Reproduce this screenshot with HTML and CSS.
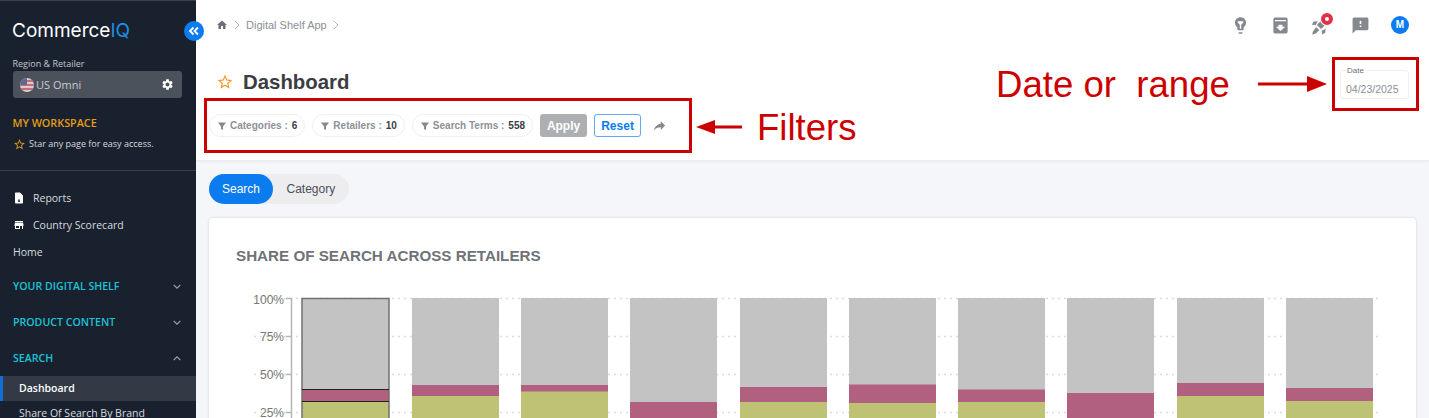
FILE: index.html
```html
<!DOCTYPE html>
<html lang="en">
<head>
    <meta charset="UTF-8">
    <meta name="viewport" content="width=device-width, initial-scale=1.0">
    <title>Dashboard - CommerceIQ</title>
    <link rel="stylesheet" href="styles.css">
</head>
<body>
    <div class="app">
        <aside class="sidebar">
            <div class="logo">Commerce<span class="logo-iq">IQ</span></div>
            <div class="region-label">Region &amp; Retailer</div>
            <div class="region-select">
                <svg class="flag" viewBox="0 0 14 14">
                    <defs><clipPath id="flag-clip"><circle cx="7" cy="7" r="7"/></clipPath></defs>
                    <g clip-path="url(#flag-clip)">
                        <rect width="14" height="14" fill="#e3c9cd"/>
                        <rect y="2" width="14" height="2" fill="#c46f7c"/>
                        <rect y="6" width="14" height="2" fill="#c46f7c"/>
                        <rect y="10" width="14" height="2" fill="#c46f7c"/>
                        <rect width="7" height="7" fill="#5d6b8f"/>
                    </g>
                </svg>
                <span class="region-name">US Omni</span>
                <svg class="gear" viewBox="0 0 24 24"><path d="M19.14 12.94c.04-.3.06-.61.06-.94 0-.32-.02-.64-.07-.94l2.03-1.58c.18-.14.23-.41.12-.61l-1.92-3.32c-.12-.22-.37-.29-.59-.22l-2.39.96c-.5-.38-1.03-.7-1.62-.94l-.36-2.54c-.04-.24-.24-.41-.48-.41h-3.84c-.24 0-.43.17-.47.41l-.36 2.54c-.59.24-1.13.57-1.62.94l-2.39-.96c-.22-.08-.47 0-.59.22L2.74 8.87c-.12.21-.08.47.12.61l2.03 1.58c-.05.3-.09.63-.09.94s.02.64.07.94l-2.03 1.58c-.18.14-.23.41-.12.61l1.92 3.32c.12.22.37.29.59.22l2.39-.96c.5.38 1.03.7 1.62.94l.36 2.54c.05.24.24.41.48.41h3.84c.24 0 .44-.17.47-.41l.36-2.54c.59-.24 1.13-.56 1.62-.94l2.39.96c.22.08.47 0 .59-.22l1.92-3.32c.12-.22.07-.47-.12-.61l-2.01-1.58zM12 15.6c-1.98 0-3.6-1.62-3.6-3.6s1.62-3.6 3.6-3.6 3.6 1.62 3.6 3.6-1.62 3.6-3.6 3.6z"/></svg>
            </div>
            <div class="workspace-title">MY WORKSPACE</div>
            <div class="workspace-hint">
                <svg class="hint-star" viewBox="0 0 24 24"><path d="M22 9.24l-7.19-.62L12 2 9.19 8.63 2 9.24l5.46 4.73L5.82 21 12 17.27 18.18 21l-1.63-7.03L22 9.24zM12 15.4l-3.76 2.27 1-4.28-3.32-2.88 4.38-.38L12 6.1l1.71 4.04 4.38.38-3.32 2.88 1 4.28L12 15.4z"/></svg>
                <span>Star any page for easy access.</span>
            </div>
            <nav class="side-nav">
                <a class="nav-link">
                    <svg class="nav-icon" viewBox="0 0 24 24"><path fill-rule="evenodd" d="M14 1H6C4.900 1 4 1.900 4 3v18c0 1.100.9 2 2 2h12c1.100 0 2-.9 2-2V7l-6-6zM10.500 15h3v5h-3z"/></svg>
                    Reports
                </a>
                <a class="nav-link">
                    <svg class="nav-icon" viewBox="0 0 24 24"><path d="M20 4H4v2h16V4zm1 10v-2l-1-5H4l-1 5v2h1v6h10v-6h4v6h2v-6h1zm-9 4H6v-4h6v4z"/></svg>
                    Country Scorecard
                </a>
                <a class="nav-link">Home</a>
                <div class="nav-section first">
                    <span>YOUR DIGITAL SHELF</span>
                    <svg class="chevron" viewBox="0 0 12 8"><path d="M2 2l4 4 4-4"/></svg>
                </div>
                <div class="nav-section">
                    <span>PRODUCT CONTENT</span>
                    <svg class="chevron" viewBox="0 0 12 8"><path d="M2 2l4 4 4-4"/></svg>
                </div>
                <div class="nav-section">
                    <span>SEARCH</span>
                    <svg class="chevron" viewBox="0 0 12 8"><path d="M2 6l4-4 4 4"/></svg>
                </div>
                <a class="sub-link active">Dashboard</a>
                <a class="sub-link">Share Of Search By Brand</a>
            </nav>
        </aside>

        <main class="content">
            <header class="page-header">
                <div class="topbar">
                    <div class="breadcrumbs">
                        <svg class="crumb-home" viewBox="0 0 24 24"><path d="M10 20v-6h4v6h5v-8h3L12 3 2 12h3v8z"/></svg>
                        <svg class="crumb-sep" viewBox="0 0 8 12"><path d="M2 2l4 4-4 4"/></svg>
                        <span>Digital Shelf App</span>
                        <svg class="crumb-sep" viewBox="0 0 8 12"><path d="M2 2l4 4-4 4"/></svg>
                    </div>
                    <div class="top-icons">
                        <svg class="top-icon" viewBox="0 0 24 24"><path d="M9.500 21.500c0 .55.45 1 1 1h3c.55 0 1-.45 1-1v-1h-5v1zM12 1.500C7.900 1.500 5 4.600 5 8.500c0 2.380 1.190 4.470 3 5.740V17c0 .55.45 1 1 1h6c.55 0 1-.45 1-1v-2.760c1.810-1.270 3-3.360 3-5.740 0-3.900-2.900-7-7-7z"/><path fill="#fff" d="M8.500 6.500h7v1.800l-2.600 2.600V16h-1.800v-5.100L8.500 8.300z"/></svg>
                        <svg class="top-icon" viewBox="0 0 24 24"><path fill-rule="evenodd" d="M5 2h14a2 2 0 0 1 2 2v16a2 2 0 0 1-2 2H5a2 2 0 0 1-2-2V4a2 2 0 0 1 2-2zm0 3v1.500h14V5zm4.500 6v2.500H6l6 5.500 6-5.500h-3.500V11z"/></svg>
                        <div class="rocket-wrap">
                            <svg class="top-icon" viewBox="0 0 24 24"><path d="M18 4.500c-4.500 1-8 3.500-10.500 7l5 5c3.500-2.500 6-6 7-10.500z"/><path d="M8.500 6.500L3.500 7 1 11l5 .5zM18.500 16l-.5 5-4 2.500-.5-5zM6.500 14l4 4-5 4.500-4 1 1-4z"/></svg>
                            <span class="rocket-badge"></span>
                        </div>
                        <svg class="top-icon" viewBox="0 0 24 24"><path d="M20 2H4c-1.100 0-2 .9-2 2v18l4-4h14c1.100 0 2-.9 2-2V4c0-1.100-.9-2-2-2zm-7 12h-2v-2h2v2zm0-4h-2V6h2v4z"/></svg>
                        <span class="avatar">M</span>
                    </div>
                </div>
                <div class="title-row">
                    <svg class="title-star" viewBox="0 0 24 24"><path d="M22 9.24l-7.19-.62L12 2 9.19 8.63 2 9.24l5.46 4.73L5.820 21 12 17.270 18.180 21l-1.630-7.030L22 9.240zM12 15.400l-3.760 2.270 1-4.280-3.320-2.880 4.380-.38L12 6.100l1.710 4.040 4.380.38-3.320 2.880 1 4.280L12 15.400z"/></svg>
                    <h1>Dashboard</h1>
                    <div class="date-field">
                        <span class="date-label">Date</span>
                        <span class="date-value">04/23/2025</span>
                    </div>
                </div>
                <div class="filters">
                    <div class="chip chip-categories">
                        <svg class="funnel" viewBox="0 0 10 10"><path d="M1 1.500h8L6 5.500v3.500L4 8V5.500z"/></svg>
                        <span class="chip-name">Categories :</span>
                        <b>6</b>
                    </div>
                    <div class="chip">
                        <svg class="funnel" viewBox="0 0 10 10"><path d="M1 1.500h8L6 5.500v3.500L4 8V5.500z"/></svg>
                        <span class="chip-name">Retailers :</span>
                        <b>10</b>
                    </div>
                    <div class="chip">
                        <svg class="funnel" viewBox="0 0 10 10"><path d="M1 1.500h8L6 5.500v3.500L4 8V5.500z"/></svg>
                        <span class="chip-name">Search Terms :</span>
                        <b>558</b>
                    </div>
                    <button class="btn btn-apply">Apply</button>
                    <button class="btn btn-reset">Reset</button>
                    <svg class="share" viewBox="0 0 24 24"><path d="M14 9V5l7 7-7 7v-4.100c-5 0-8.500 1.600-11 5.100 1-5 4-10 11-11z"/></svg>
                </div>
            </header>

            <section class="body-area">
                <div class="tabs">
                    <span class="tab tab-active">Search</span>
                    <span class="tab">Category</span>
                </div>
                <div class="card">
                    <h2>SHARE OF SEARCH ACROSS RETAILERS</h2>
                    <svg class="chart" width="1207" height="140" viewBox="209 278 1207 140">
                        <g class="grid">
                            <line x1="254" x2="1381" y1="298.500" y2="298.500"/>
                            <line x1="254" x2="1381" y1="336.500" y2="336.500"/>
                            <line x1="254" x2="1381" y1="374.500" y2="374.500"/>
                            <line x1="254" x2="1381" y1="412.500" y2="412.500"/>
                        </g>
                        <g class="ticks">
                            <line x1="291.500" x2="291.500" y1="298" y2="418"/>
                            <line x1="286" x2="292" y1="298.500" y2="298.500"/>
                            <line x1="286" x2="292" y1="336.500" y2="336.500"/>
                            <line x1="286" x2="292" y1="374.500" y2="374.500"/>
                            <line x1="286" x2="292" y1="412.500" y2="412.500"/>
                        </g>
                        <g class="tick-labels">
                            <text x="284" y="304">100%</text>
                            <text x="284" y="341">75%</text>
                            <text x="284" y="379">50%</text>
                            <text x="284" y="417">25%</text>
                        </g>
                        <g class="bars-rest">
                            <rect x="302" y="298" width="87" height="120"/>
                            <rect x="412" y="298" width="87" height="120"/>
                            <rect x="521" y="298" width="87" height="120"/>
                            <rect x="630" y="298" width="87" height="120"/>
                            <rect x="740" y="298" width="87" height="120"/>
                            <rect x="849" y="298" width="87" height="120"/>
                            <rect x="958" y="298" width="87" height="120"/>
                            <rect x="1067" y="298" width="87" height="120"/>
                            <rect x="1177" y="298" width="87" height="120"/>
                            <rect x="1286" y="298" width="87" height="120"/>
                        </g>
                        <g class="bars-maroon">
                            <rect x="302" y="389" width="87" height="29"/>
                            <rect x="412" y="385" width="87" height="33"/>
                            <rect x="521" y="385" width="87" height="33"/>
                            <rect x="630" y="402" width="87" height="16"/>
                            <rect x="740" y="387" width="87" height="31"/>
                            <rect x="849" y="384.500" width="87" height="33.500"/>
                            <rect x="958" y="389.500" width="87" height="28.500"/>
                            <rect x="1067" y="393" width="87" height="25"/>
                            <rect x="1177" y="383" width="87" height="35"/>
                            <rect x="1286" y="388" width="87" height="30"/>
                        </g>
                        <g class="bars-green">
                            <rect x="302" y="402" width="87" height="16"/>
                            <rect x="412" y="396" width="87" height="22"/>
                            <rect x="521" y="391.500" width="87" height="26.500"/>
                            <rect x="740" y="402" width="87" height="16"/>
                            <rect x="849" y="403" width="87" height="15"/>
                            <rect x="958" y="402" width="87" height="16"/>
                            <rect x="1177" y="396" width="87" height="22"/>
                            <rect x="1286" y="401" width="87" height="17"/>
                        </g>
                        <g class="bar-selected">
                            <rect x="302" y="298.500" width="87" height="121"/>
                            <line x1="302" x2="389" y1="389.500" y2="389.500"/>
                            <line x1="302" x2="389" y1="401.500" y2="401.500"/>
                        </g>
                    </svg>
                </div>
            </section>
        </main>
    </div>

    <button class="collapse-btn" aria-label="Collapse">
        <svg viewBox="0 0 12 10"><path d="M5.500 1.500L2 5l3.500 3.500M10 1.500L6.500 5l3.500 3.500"/></svg>
    </button>

    <!-- red notes drawn on top of the screenshot -->
    <div class="note-box note-box-filters"></div>
    <div class="note-box note-box-date"></div>
    <div class="note-text note-filters">Filters</div>
    <div class="note-text note-date">Date or&nbsp; range</div>
    <svg class="note-arrow arrow-filters" viewBox="0 0 46 14"><path d="M46 5.500H19V0L0 7l19 7V8.500h27z"/></svg>
    <svg class="note-arrow arrow-date" viewBox="0 0 69 16"><path d="M0 6.500h49V0l20 8-20 8V9.500H0z"/></svg>
</body>
</html>
```
FILE: styles.css
```css
* {
    margin: 0;
    padding: 0;
    box-sizing: border-box;
}

body {
    font-family: 'Liberation Sans', Arial, sans-serif;
    background: #f5f6fa;
    overflow: hidden;
    height: 418px;
    color: #333;
}

.app {
    display: flex;
    height: 418px;
}

/* sidebar */
.sidebar {
    width: 196px;
    flex-shrink: 0;
    background: #19212e;
    color: #d8dade;
    font-family: 'Open Sans', sans-serif;
    overflow: hidden;
    padding-top: 18px;
    border-top: 1px solid #3a4049;
}

.logo {
    font-family: 'Inter', sans-serif;
    font-size: 19px;
    line-height: 24px;
    color: #fff;
    padding-left: 12px;
}

.logo-iq {
    color: #1f8fe5;
}

.region-label {
    font-size: 9px;
    line-height: 12px;
    padding-left: 12.500px;
    margin-top: 15px;
    color: #c4c7cc;
}

.region-select {
    display: flex;
    align-items: center;
    gap: 2px;
    height: 27px;
    margin: 1px 14px 0 13px;
    padding: 0 8px 0 7px;
    background: #4c525b;
    border-radius: 3px;
    font-size: 11px;
    color: #c9ccd1;
}

.flag {
    width: 14px;
    height: 14px;
}

.region-name {
    flex: 1;
}

.gear {
    width: 13px;
    height: 13px;
    fill: #fff;
}

.workspace-title {
    font-size: 10.800px;
    line-height: 14px;
    font-weight: 600;
    color: #e39b19;
    padding-left: 12.500px;
    margin-top: 18px;
}

.workspace-hint {
    display: flex;
    align-items: center;
    gap: 3px;
    font-size: 9px;
    line-height: 14px;
    padding-left: 13px;
    margin-top: 7px;
    padding-bottom: 19px;
    border-bottom: 1px solid #3a4049;
}

.hint-star {
    width: 13px;
    height: 13px;
    fill: #e39b19;
}

.side-nav {
    display: flex;
    flex-direction: column;
    padding-top: 13px;
}

.nav-link {
    display: flex;
    align-items: center;
    gap: 8px;
    height: 27px;
    padding-left: 13px;
    font-size: 10.500px;
}

.nav-icon {
    width: 12px;
    height: 12px;
    fill: #fff;
}

.nav-section {
    display: flex;
    align-items: center;
    justify-content: space-between;
    height: 36px;
    padding: 0 14px 0 13px;
    font-size: 10.600px;
    font-weight: 600;
    color: #1cc3d6;
}

.nav-section.first {
    margin-top: 3px;
}

.chevron {
    width: 10px;
    height: 7px;
    fill: none;
    stroke: #9aa0a8;
    stroke-width: 1.500;
}

.sub-link {
    display: block;
    height: 25px;
    line-height: 25px;
    padding-left: 19px;
    font-size: 10.500px;
    white-space: nowrap;
}

.sub-link.active {
    background: #333a45;
    color: #fff;
    font-weight: 600;
    box-shadow: inset 3px 0 0 #0f6fd6;
}

/* main column */
.content {
    flex: 1;
    min-width: 0;
    display: flex;
    flex-direction: column;
}

.page-header {
    height: 160px;
    flex-shrink: 0;
    background: #fff;
    box-shadow: 0 1px 3px rgba(0, 0, 0, 0.08);
    padding-left: 13px;
    position: relative;
}

.topbar {
    display: flex;
    align-items: center;
    justify-content: space-between;
    height: 50px;
    padding: 0 20px 0 7px;
}

.breadcrumbs {
    display: flex;
    align-items: center;
    gap: 5px;
    font-size: 11px;
    color: #8b8f95;
}

.crumb-home {
    width: 12px;
    height: 12px;
    fill: #6b7078;
}

.crumb-sep {
    width: 8px;
    height: 12px;
    fill: none;
    stroke: #b5b8bc;
    stroke-width: 1;
}

.top-icons {
    display: flex;
    align-items: center;
    gap: 21px;
}

.top-icon {
    display: block;
    width: 19px;
    height: 19px;
    fill: #85898f;
}

.rocket-wrap {
    position: relative;
}

.rocket-badge {
    position: absolute;
    top: -3px;
    right: -3px;
    width: 12px;
    height: 12px;
    border-radius: 50%;
    border: 4px solid #e2304a;
    background: #fff;
    box-shadow: 0 0 0 1px #fff;
}

.avatar {
    width: 18px;
    height: 18px;
    border-radius: 50%;
    background: #0a7cf0;
    color: #fff;
    font-size: 10px;
    font-weight: bold;
    line-height: 18px;
    text-align: center;
}

.title-row {
    display: flex;
    align-items: center;
    gap: 9px;
    height: 50px;
    padding-left: 7px;
    padding-right: 20px;
    margin-top: 7px;
}

.title-star {
    width: 18px;
    height: 18px;
    fill: #f59a2c;
}

h1 {
    font-size: 20.400px;
    font-weight: bold;
    color: #3a3d42;
    flex: 1;
}

.date-field {
    position: absolute;
    top: 70px;
    right: 20px;
    width: 69px;
    height: 29px;
    border: 1px solid #eceef1;
    border-radius: 3px;
    padding: 8px 0 0 5px;
}

.date-label {
    position: absolute;
    top: -5px;
    left: 5px;
    padding: 0 3px 0 1px;
    background: #fff;
    font-size: 8px;
    line-height: 10px;
    color: #6b7078;
}

.date-value {
    font-size: 10.500px;
    color: #8b8f95;
}

.filters {
    display: flex;
    align-items: center;
    gap: 7px;
    height: 23px;
    margin-top: 7px;
}

.chip {
    display: flex;
    align-items: center;
    height: 23px;
    padding: 0 7px;
    border: 1px solid #eeeff2;
    border-radius: 12px;
    font-size: 10px;
    font-weight: bold;
    color: #8d9197;
}

.chip b {
    color: #3c4048;
    margin-left: 4px;
}

.funnel {
    width: 10px;
    height: 10px;
    fill: #85898f;
    margin-right: 3px;
}

.btn {
    height: 23px;
    width: 47px;
    font-family: inherit;
    font-size: 12px;
    font-weight: bold;
    border-radius: 3px;
    border: none;
}

.btn-apply {
    background: #aeafb2;
    color: #fff;
}

.btn-reset {
    background: #fff;
    color: #0a7cf0;
    border: 1px solid #62a8f5;
}

.share {
    width: 15px;
    height: 15px;
    fill: #85898f;
    margin-left: 4px;
}

/* tabs and card */
.body-area {
    padding: 14px 13px 0;
    flex: 1;
    min-height: 0;
}

.tabs {
    display: inline-flex;
    height: 30px;
    background: #ededf0;
    border-radius: 15px;
}

.tab {
    display: flex;
    align-items: center;
    justify-content: center;
    padding: 0 13.500px;
    font-size: 12px;
    color: #4c5056;
    border-radius: 15px;
}

.tab-active {
    background: #0a7cf0;
    color: #fff;
    padding: 0 13px;
    width: 64px;
}

.card {
    margin-top: 14px;
    height: 220px;
    background: #fff;
    border-radius: 4px;
    box-shadow: 0 0 3px rgba(0, 0, 0, 0.15);
    overflow: hidden;
}

.card h2 {
    font-size: 15.200px;
    font-weight: bold;
    line-height: 18px;
    color: #6f7378;
    padding: 29px 0 0 27px;
    height: 60px;
}

.chart {
    display: block;
}

.grid line {
    stroke: #dcdcdc;
    stroke-width: 1.500;
    stroke-dasharray: 2 4;
}

.ticks line {
    stroke: #b5b5b5;
    stroke-width: 1.500;
}

.tick-labels text {
    font-size: 12px;
    fill: #777;
    text-anchor: end;
}

.bars-rest rect {
    fill: #c3c3c3;
}

.bars-maroon rect {
    fill: #b1607f;
}

.bars-green rect {
    fill: #bdc275;
}

.bar-selected rect {
    fill: none;
    stroke: #707070;
    stroke-width: 1.500;
}

.bar-selected line {
    stroke: #222;
    stroke-width: 1;
}

/* overlays */
.collapse-btn {
    position: absolute;
    left: 184px;
    top: 21px;
    width: 20px;
    height: 20px;
    border-radius: 50%;
    border: none;
    background: #0a7cf0;
    display: flex;
    align-items: center;
    justify-content: center;
}

.collapse-btn svg {
    width: 12px;
    height: 10px;
    fill: none;
    stroke: #fff;
    stroke-width: 1.800;
}

.note-box {
    position: absolute;
    border: 3px solid #cc0000;
}

.note-box-filters {
    left: 204px;
    top: 98px;
    width: 488px;
    height: 55px;
}

.note-box-date {
    left: 1332px;
    top: 57px;
    width: 87px;
    height: 54px;
}

.note-text {
    position: absolute;
    color: #cc0000;
    font-size: 36.600px;
    line-height: 40px;
    white-space: nowrap;
}

.note-filters {
    left: 757px;
    top: 108px;
}

.note-date {
    left: 996px;
    top: 65px;
}

.note-arrow {
    position: absolute;
    fill: #cc0000;
}

.arrow-filters {
    left: 696px;
    top: 120px;
    width: 46px;
    height: 14px;
}

.arrow-date {
    left: 1258px;
    top: 76px;
    width: 69px;
    height: 16px;
}
```
